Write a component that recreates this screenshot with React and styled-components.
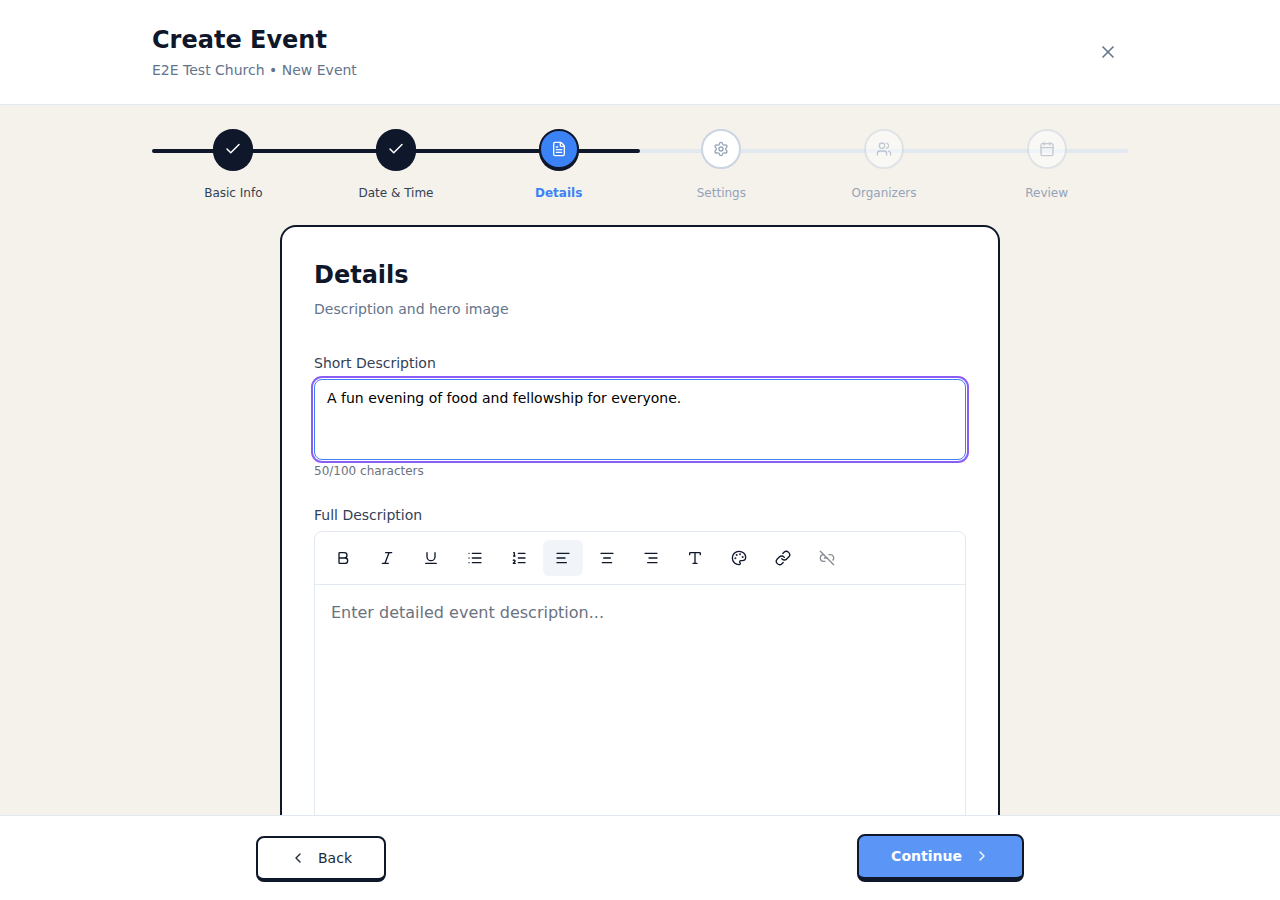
import React from 'react'
import styled, { createGlobalStyle } from 'styled-components'
import {
  X, Check, FileText, Settings, Users, Calendar, ChevronLeft, ChevronRight,
  Bold, Italic, Underline, List, ListOrdered, AlignLeft, AlignCenter, AlignRight,
  Type, Palette, Link, Link2Off,
} from 'lucide-react'

const GlobalStyle = createGlobalStyle`
  html, body { margin: 0; padding: 0; height: 100%; }
  body { font-family: "DejaVu Sans", sans-serif; background: #f5f2ec; }
  #root { height: 100%; }
  * { box-sizing: border-box; }
`

const Page = styled.div`
  height: 100vh;
  display: flex;
  flex-direction: column;
  overflow: hidden;
`

const Header = styled.header`
  flex: none;
  height: 105px;
  background: #fff;
  border-bottom: 1px solid #e2e8f0;
`

const HeaderInner = styled.div`
  width: 976px;
  height: 100%;
  margin: 0 auto;
  display: flex;
  align-items: center;
  justify-content: space-between;
`

const PageTitle = styled.h1`
  margin: 0 0 4px;
  font-size: 24px;
  line-height: 32px;
  font-weight: 700;
  color: #0f172a;
`

const PageSub = styled.p`
  margin: 0;
  font-size: 14px;
  line-height: 20px;
  color: #64748b;
`

const CloseButton = styled.button`
  width: 40px;
  height: 40px;
  padding: 0;
  border: 0;
  background: none;
  color: #64748b;
  display: flex;
  align-items: center;
  justify-content: center;
`

const Main = styled.main`
  flex: 1;
  min-height: 0;
  overflow: hidden;
`

const Stepper = styled.ol`
  position: relative;
  width: 976px;
  margin: 24px auto 0;
  padding: 0;
  list-style: none;
  display: grid;
  grid-template-columns: repeat(6, 1fr);
`

const Track = styled.div`
  position: absolute;
  left: 0;
  right: 0;
  top: 20px;
  height: 4px;
  border-radius: 2px;
  background: #e2e8f0;
`

const TrackFill = styled.div`
  height: 100%;
  border-radius: 2px;
  background: #0f172a;
`

const Step = styled.li`
  position: relative;
  display: flex;
  flex-direction: column;
  align-items: center;
`

const Circle = styled.div`
  width: 40px;
  height: 40px;
  border-radius: 50%;
  display: flex;
  align-items: center;
  justify-content: center;
  border: 2px solid;
  ${p => p.$state === 'done' && 'background:#0f172a;border-color:#0f172a;color:#fff;box-shadow:0 2px 0 #0f172a;'}
  ${p => p.$state === 'active' && 'background:#3b82f6;border-color:#0f172a;color:#fff;box-shadow:0 2px 0 #0f172a;'}
  ${p => p.$state === 'next' && 'background:#fff;border-color:#cbd5e1;color:#94a3b8;'}
  ${p => p.$state === 'later' && 'background:#fff;border-color:#cbd5e1;color:#94a3b8;opacity:.5;'}
`

const StepLabel = styled.span`
  margin-top: 16px;
  font-size: 12px;
  line-height: 16px;
  font-weight: ${p => (p.$state === 'active' ? 700 : 400)};
  color: ${p => (p.$state === 'active' ? '#3b82f6' : p.$state === 'done' ? '#334155' : '#94a3b8')};
`

const Card = styled.section`
  width: 720px;
  margin: 24px auto 0;
  padding: 32px;
  height: 700px;
  background: #fff;
  border: 2px solid #0f172a;
  border-radius: 16px;
`

const CardTitle = styled.h2`
  margin: 0 0 8px;
  font-size: 24px;
  line-height: 32px;
  font-weight: 700;
  color: #0f172a;
`

const CardSub = styled.p`
  margin: 0 0 34px;
  font-size: 14px;
  line-height: 20px;
  color: #64748b;
`

const Label = styled.label`
  display: block;
  margin-bottom: 6px;
  font-size: 14px;
  line-height: 20px;
  color: #334155;
`

const TextArea = styled.textarea`
  display: block;
  width: 100%;
  height: 81px;
  padding: 8px 12px;
  border: 1px solid #3b82f6;
  border-radius: 8px;
  outline: none;
  resize: none;
  background: #fff;
  color: #000;
  font-family: "DejaVu Sans", sans-serif;
  font-size: 14px;
  line-height: 20px;
  box-shadow: 0 0 0 1px #fff, 0 0 0 3px #8b5cf6;
`

const Counter = styled.p`
  margin: 3px 0 26px;
  font-size: 12px;
  line-height: 16px;
  color: #6b7280;
`

const Editor = styled.div`
  border: 1px solid #e2e8f0;
  border-radius: 8px;
  height: 400px;
`

const Toolbar = styled.div`
  height: 53px;
  padding: 8px;
  display: flex;
  gap: 4px;
  border-bottom: 1px solid #e2e8f0;
`

const ToolButton = styled.button`
  width: 40px;
  height: 36px;
  padding: 0;
  border: 0;
  border-radius: 6px;
  display: flex;
  align-items: center;
  justify-content: center;
  background: ${p => (p.$active ? '#f1f5f9' : 'transparent')};
  color: #0f172a;
  opacity: ${p => (p.$disabled ? 0.5 : 1)};
`

const Placeholder = styled.div`
  padding: 16px;
  font-size: 16px;
  line-height: 24px;
  color: #6b7280;
`

const Footer = styled.footer`
  flex: none;
  height: 85px;
  background: #fff;
  border-top: 1px solid #e2e8f0;
`

const FooterInner = styled.div`
  width: 768px;
  height: 100%;
  margin: 0 auto;
  padding-bottom: 18px;
  display: flex;
  align-items: flex-end;
  justify-content: space-between;
`

const BackButton = styled.button`
  width: 130px;
  height: 46px;
  padding: 0;
  display: flex;
  align-items: center;
  justify-content: center;
  gap: 12px;
  background: #fff;
  border: 2px solid #0f172a;
  border-bottom-width: 4px;
  border-radius: 8px;
  color: #1f2937;
  font-family: "DejaVu Sans", sans-serif;
  font-size: 14px;
`

const ContinueButton = styled.button`
  width: 167px;
  height: 48px;
  padding: 0 0 2px;
  display: flex;
  align-items: center;
  justify-content: center;
  gap: 12px;
  background: #5b96f7;
  border: 2px solid #0f172a;
  border-bottom-width: 5px;
  border-radius: 8px;
  color: #fff;
  font-family: "DejaVu Sans", sans-serif;
  font-size: 14px;
  font-weight: 700;
`

const steps = [
  { label: 'Basic Info', state: 'done', Icon: Check, size: 18 },
  { label: 'Date & Time', state: 'done', Icon: Check, size: 18 },
  { label: 'Details', state: 'active', Icon: FileText, size: 16 },
  { label: 'Settings', state: 'next', Icon: Settings, size: 16 },
  { label: 'Organizers', state: 'later', Icon: Users, size: 16 },
  { label: 'Review', state: 'later', Icon: Calendar, size: 16 },
]

const tools = [
  { Icon: Bold }, { Icon: Italic }, { Icon: Underline }, { Icon: List }, { Icon: ListOrdered },
  { Icon: AlignLeft, active: true }, { Icon: AlignCenter }, { Icon: AlignRight },
  { Icon: Type }, { Icon: Palette }, { Icon: Link }, { Icon: Link2Off, disabled: true },
]

export default function App() {
  return (
    <Page>
      <GlobalStyle />
      <Header>
        <HeaderInner>
          <div>
            <PageTitle>Create Event</PageTitle>
            <PageSub>E2E Test Church • New Event</PageSub>
          </div>
          <CloseButton><X size={20} /></CloseButton>
        </HeaderInner>
      </Header>

      <Main>
        <Stepper>
          <Track><TrackFill style={{ width: '50%' }} /></Track>
          {steps.map(({ label, state, Icon, size }) => (
            <Step key={label}>
              <Circle $state={state}><Icon size={size} /></Circle>
              <StepLabel $state={state}>{label}</StepLabel>
            </Step>
          ))}
        </Stepper>

        <Card>
          <CardTitle>Details</CardTitle>
          <CardSub>Description and hero image</CardSub>
          <Label>Short Description</Label>
          <TextArea readOnly value="A fun evening of food and fellowship for everyone." />
          <Counter>50/100 characters</Counter>
          <Label>Full Description</Label>
          <Editor>
            <Toolbar>
              {tools.map(({ Icon, active, disabled }, i) => (
                <ToolButton key={i} $active={active} $disabled={disabled}><Icon size={16} /></ToolButton>
              ))}
            </Toolbar>
            <Placeholder>Enter detailed event description...</Placeholder>
          </Editor>
        </Card>
      </Main>

      <Footer>
        <FooterInner>
          <BackButton><ChevronLeft size={16} />Back</BackButton>
          <ContinueButton>Continue<ChevronRight size={16} /></ContinueButton>
        </FooterInner>
      </Footer>
    </Page>
  )
}
